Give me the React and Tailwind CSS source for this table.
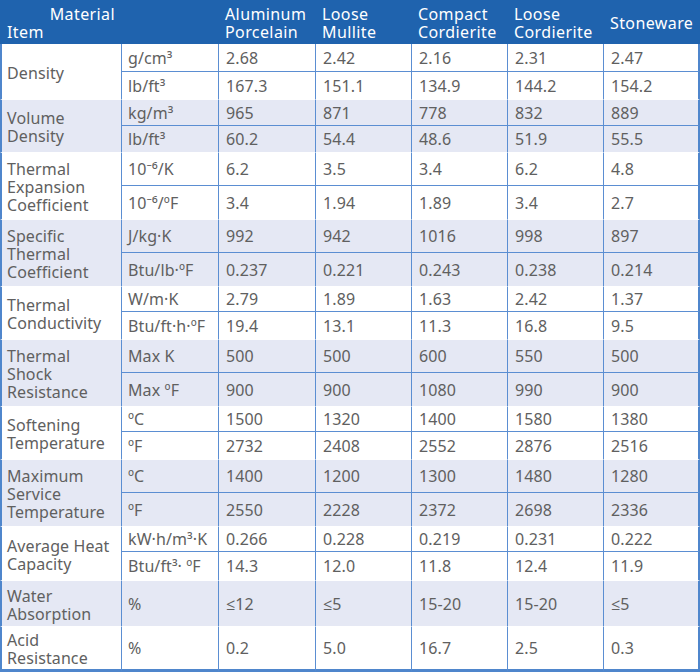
// App.jsx — ceramic material properties table

const cols = ['Aluminum Porcelain', 'Loose Mullite', 'Compact Cordierite', 'Loose Cordierite', 'Stoneware'];

const groups = [
  { label: 'Density', rows: [
    { h: 'h-[28px]', unit: 'g/cm³', v: ['2.68', '2.42', '2.16', '2.31', '2.47'] },
    { h: 'h-[27px]', unit: 'lb/ft³', v: ['167.3', '151.1', '134.9', '144.2', '154.2'] },
  ] },
  { label: 'Volume Density', rows: [
    { h: 'h-[27px]', unit: 'kg/m³', v: ['965', '871', '778', '832', '889'] },
    { h: 'h-[26px]', unit: 'lb/ft³', v: ['60.2', '54.4', '48.6', '51.9', '55.5'] },
  ] },
  { label: 'Thermal Expansion Coefficient', rows: [
    { h: 'h-[34px]', unit: '10⁻⁶/K', v: ['6.2', '3.5', '3.4', '6.2', '4.8'] },
    { h: 'h-[33px]', unit: '10⁻⁶/ºF', v: ['3.4', '1.94', '1.89', '3.4', '2.7'] },
  ] },
  { label: 'Specific Thermal Coefficient', rows: [
    { h: 'h-[34px]', unit: 'J/kg·K', v: ['992', '942', '1016', '998', '897'] },
    { h: 'h-[33px]', unit: 'Btu/lb·ºF', v: ['0.237', '0.221', '0.243', '0.238', '0.214'] },
  ] },
  { label: 'Thermal Conductivity', rows: [
    { h: 'h-[26px]', unit: 'W/m·K', v: ['2.79', '1.89', '1.63', '2.42', '1.37'] },
    { h: 'h-[27px]', unit: 'Btu/ft·h·ºF', v: ['19.4', '13.1', '11.3', '16.8', '9.5'] },
  ] },
  { label: 'Thermal Shock Resistance', rows: [
    { h: 'h-[34px]', unit: 'Max K', v: ['500', '500', '600', '550', '500'] },
    { h: 'h-[33px]', unit: 'Max ºF', v: ['900', '900', '1080', '990', '900'] },
  ] },
  { label: 'Softening Temperature', rows: [
    { h: 'h-[26px]', unit: 'ºC', v: ['1500', '1320', '1400', '1580', '1380'] },
    { h: 'h-[27px]', unit: 'ºF', v: ['2732', '2408', '2552', '2876', '2516'] },
  ] },
  { label: 'Maximum Service Temperature', rows: [
    { h: 'h-[34px]', unit: 'ºC', v: ['1400', '1200', '1300', '1480', '1280'] },
    { h: 'h-[33px]', unit: 'ºF', v: ['2550', '2228', '2372', '2698', '2336'] },
  ] },
  { label: 'Average Heat Capacity', rows: [
    { h: 'h-[26px]', unit: 'kW·h/m³·K', v: ['0.266', '0.228', '0.219', '0.231', '0.222'] },
    { h: 'h-[28px]', unit: 'Btu/ft³· ºF', v: ['14.3', '12.0', '11.8', '12.4', '11.9'] },
  ] },
  { label: 'Water Absorption', rows: [
    { h: 'h-[46px]', unit: '%', v: ['≤12', '≤5', '15-20', '15-20', '≤5'] },
  ] },
  { label: 'Acid Resistance', rows: [
    { h: 'h-[46px]', unit: '%', v: ['0.2', '5.0', '16.7', '2.5', '0.3'] },
  ] },
];

export default function App() {
  return (
    <div className="w-[700px] h-[672px] bg-white overflow-hidden">
      <table
        className="w-[700px] table-fixed border-separate border-spacing-0 text-[16px] leading-[18px] tracking-[0.1px] text-[#606060]"
        style={{ fontFamily: '"Noto Sans", "Open Sans", sans-serif' }}
      >
        <colgroup>
          <col className="w-[122px]" />
          <col className="w-[96px]" />
          <col className="w-[97px]" />
          <col className="w-[96px]" />
          <col className="w-[96px]" />
          <col className="w-[96px]" />
          <col className="w-[97px]" />
        </colgroup>
        <thead>
          <tr className="bg-[#1f63ae] text-white">
            <th className="h-[44px] px-[7px] pt-[2px] font-normal text-left align-middle tracking-[0.4px]">
              <div className="text-right">Material</div>
              <div>Item</div>
            </th>
            <th className="h-[44px]" />
            {cols.map(c => (
              <th key={c} className="h-[44px] px-[7px] pt-[2px] font-normal text-left align-middle tracking-[0.4px]">{c}</th>
            ))}
          </tr>
        </thead>
        <tbody>
          {groups.map((g, gi) => {
            const shade = gi % 2 === 1 ? 'bg-[#e5e8f4]' : 'bg-white';
            const lastGroup = gi === groups.length - 1;
            return g.rows.map((r, ri) => {
              const first = ri === 0;
              const split = first && g.rows.length > 1;
              const top = first && gi > 0 ? 'border-t border-t-white' : '';
              const sub = split ? 'border-b border-b-[#5b8ed2]' : '';
              const bottom = lastGroup ? 'border-b-[3px] border-b-[#4f86cc]' : '';
              return (
                <tr key={g.label + ri} className={shade}>
                  {first && (
                    <td
                      rowSpan={g.rows.length}
                      className={`pl-[5px] pr-[4px] pt-[2px] align-middle border-l-2 border-l-[#4f86cc] border-r border-r-[#5b8ed2] ${top} ${bottom}`}
                    >
                      {g.label}
                    </td>
                  )}
                  <td className={`${r.h} pl-[6px] whitespace-nowrap align-middle ${top} ${sub} ${bottom}`}>{r.unit}</td>
                  {r.v.map((v, i) => (
                    <td
                      key={i}
                      className={`${r.h} pl-[7px] align-middle border-l border-l-[#5b8ed2] ${i === 4 ? 'border-r-2 border-r-[#4f86cc]' : ''} ${top} ${sub} ${bottom}`}
                    >
                      {v}
                    </td>
                  ))}
                </tr>
              );
            });
          })}
        </tbody>
      </table>
    </div>
  );
}
